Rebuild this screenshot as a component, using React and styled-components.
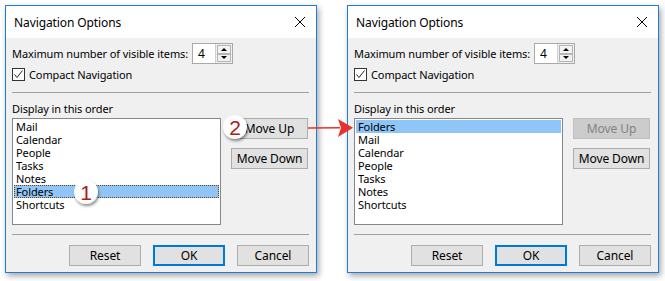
import React from "react";
import styled, { createGlobalStyle } from "styled-components";

const GlobalStyle = createGlobalStyle`
  html, body {
    margin: 0;
    padding: 0;
    background: #ffffff;
  }
  body {
    font-family: "Segoe UI", "Noto Sans", "Liberation Sans", sans-serif;
    font-size: 11px;
    letter-spacing: -0.1px;
    color: #000;
  }
`;

const Page = styled.div`
  position: relative;
  width: 665px;
  height: 281px;
  display: flex;
  gap: 30px;
  padding: 5px 0 0 5px;
  box-sizing: border-box;
`;

const Dialog = styled.div`
  position: relative;
  width: 312px;
  height: 268px;
  box-sizing: border-box;
  border: 1px solid #1a7ed4;
  background: #f0f0f0;
  box-shadow: 2px 3px 6px rgba(0, 0, 0, 0.35);
  display: flex;
  flex-direction: column;
`;

const TitleBar = styled.div`
  height: 32px;
  background: #fff;
  display: flex;
  align-items: center;
  justify-content: space-between;
  padding: 0 10px 0 8px;
  font-size: 12px;
`;

const CloseX = styled.svg`
  width: 12px;
  height: 12px;
`;

const Body = styled.div`
  flex: 1;
  padding: 5px 7px 0 6px;
  display: flex;
  flex-direction: column;
`;

const Row = styled.div`
  display: flex;
  align-items: center;
  gap: ${(p) => p.$gap || 4}px;
  margin-top: ${(p) => p.$mt || 0}px;
`;

const Spinner = styled.div`
  width: 41px;
  height: 21px;
  box-sizing: border-box;
  border: 1px solid #a9a9a9;
  background: #fff;
  display: flex;
  justify-content: space-between;
`;

const SpinValue = styled.span`
  padding-left: 5px;
  line-height: 19px;
  font-size: 12px;
`;

const SpinButtons = styled.div`
  width: 16px;
  display: flex;
  flex-direction: column;
  border-left: 1px solid #cfcfcf;
  background: #f0f0f0;
`;

const SpinBtn = styled.div`
  flex: 1;
  display: flex;
  align-items: center;
  justify-content: center;
  border: 1px solid #b5b5b5;
  margin: ${(p) => (p.$top ? "1px 1px 0 1px" : "0 1px 1px 1px")};
  background: #f3f3f3;
`;

const Tri = styled.span`
  width: 0;
  height: 0;
  border-left: 3px solid transparent;
  border-right: 3px solid transparent;
  ${(p) =>
    p.$up ? "border-bottom: 3px solid #000;" : "border-top: 3px solid #000;"}
`;

const CheckBox = styled.span`
  width: 13px;
  height: 13px;
  box-sizing: border-box;
  border: 1px solid #333;
  background: #fff;
  display: flex;
  align-items: center;
  justify-content: center;
`;

const Separator = styled.div`
  height: 1px;
  background: #a0a0a0;
  margin-top: ${(p) => p.$mt}px;
`;

const Label = styled.div`
  margin-top: 8px;
  line-height: 16px;
`;

const ListArea = styled.div`
  display: flex;
  gap: 10px;
  margin-top: 1px;
`;

const ListBox = styled.div`
  width: 209px;
  height: 107px;
  box-sizing: border-box;
  border: 1px solid #828790;
  background: #fff;
  padding: 1px 1px;
`;

const Item = styled.div`
  height: 13px;
  line-height: 13px;
  padding-left: 2px;
  box-sizing: border-box;
  overflow: hidden;
  background: ${(p) => (p.$selected ? "#90c6f7" : "transparent")};
  outline: ${(p) => (p.$focus ? "1px dotted #7a3a14" : "none")};
  outline-offset: -1px;
`;

const ButtonColumn = styled.div`
  display: flex;
  flex-direction: column;
  gap: 9px;
`;

const Button = styled.div`
  width: ${(p) => p.$w || 77}px;
  height: 21px;
  box-sizing: border-box;
  border: ${(p) => (p.$default ? "2px solid #0078d7" : "1px solid #adadad")};
  background: ${(p) => (p.$disabled ? "#cccccc" : "#e1e1e1")};
  color: ${(p) => (p.$disabled ? "#838383" : "#000")};
  border-color: ${(p) => (p.$disabled ? "#bfbfbf" : undefined)};
  display: flex;
  align-items: center;
  justify-content: center;
  font-size: 12px;
`;

const Footer = styled.div`
  display: flex;
  justify-content: flex-end;
  gap: 12px;
  margin-top: 10px;
`;

const Badge = styled.div`
  position: absolute;
  left: ${(p) => p.$x - 12}px;
  top: ${(p) => p.$y - 12}px;
  width: 24px;
  height: 24px;
  border-radius: 50%;
  background: radial-gradient(circle at 45% 40%, #ffffff 60%, #e6e6e6 100%);
  box-shadow: 1px 2px 3px rgba(0, 0, 0, 0.45);
  display: flex;
  align-items: center;
  justify-content: center;
  font-family: "Liberation Sans", Arial, sans-serif;
  font-size: 21px;
  letter-spacing: 0;
  color: #a8201a;
  line-height: 1;
`;

const Arrow = styled.svg`
  position: absolute;
  left: 308px;
  top: 117px;
`;

const items = ["Mail", "Calendar", "People", "Tasks", "Notes", "Folders", "Shortcuts"];

function NavDialog({ order, selected, focused, moveUpDisabled }) {
  return (
    <Dialog>
      <TitleBar>
        <span>Navigation Options</span>
        <CloseX viewBox="0 0 12 12">
          <path d="M1 1 L11 11 M11 1 L1 11" stroke="#000" strokeWidth="1" />
        </CloseX>
      </TitleBar>
      <Body>
        <Row $gap={4}>
          <span>Maximum number of visible items:</span>
          <Spinner>
            <SpinValue>4</SpinValue>
            <SpinButtons>
              <SpinBtn $top>
                <Tri $up />
              </SpinBtn>
              <SpinBtn>
                <Tri />
              </SpinBtn>
            </SpinButtons>
          </Spinner>
        </Row>
        <Row $gap={4} $mt={3}>
          <CheckBox>
            <svg width="11" height="11" viewBox="0 0 11 11">
              <path d="M1.5 5.5 L4 8.5 L9.5 1.5" fill="none" stroke="#222" strokeWidth="1" />
            </svg>
          </CheckBox>
          <span>Compact Navigation</span>
        </Row>
        <Separator $mt={10} />
        <Label>Display in this order</Label>
        <ListArea>
          <ListBox>
            {order.map((name) => (
              <Item key={name} $selected={name === selected} $focus={focused && name === selected}>
                {name}
              </Item>
            ))}
          </ListBox>
          <ButtonColumn>
            <Button $disabled={moveUpDisabled}>Move Up</Button>
            <Button>Move Down</Button>
          </ButtonColumn>
        </ListArea>
        <Separator $mt={9} />
        <Footer>
          <Button $w={72}>Reset</Button>
          <Button $w={72} $default>
            OK
          </Button>
          <Button $w={72}>Cancel</Button>
        </Footer>
      </Body>
    </Dialog>
  );
}

export default function App() {
  const moved = ["Folders", ...items.filter((i) => i !== "Folders")];
  return (
    <>
      <GlobalStyle />
      <Page>
        <NavDialog order={items} selected="Folders" focused />
        <NavDialog order={moved} selected="Folders" moveUpDisabled />
        <Badge $x={235} $y={127}>2</Badge>
        <Badge $x={86} $y={192}>1</Badge>
        <Arrow width="46" height="22" viewBox="0 0 46 22">
          <path d="M0 10.2 L32 10 L32 11.6 L0 11.8 Z" fill="#e8302c" />
          <path d="M30 2 L45 10.8 L30 20 L33 10.8 Z" fill="#e8302c" />
        </Arrow>
      </Page>
    </>
  );
}
